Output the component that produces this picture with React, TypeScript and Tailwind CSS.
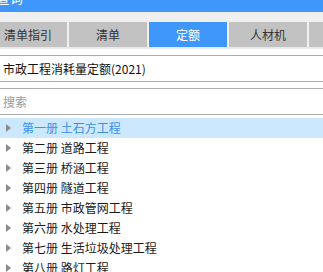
import { useState } from "react";

const tabs = ["清单指引", "清单", "定额", "人材机", ""];

const books = [
  "第一册 土石方工程",
  "第二册 道路工程",
  "第三册 桥涵工程",
  "第四册 隧道工程",
  "第五册 市政管网工程",
  "第六册 水处理工程",
  "第七册 生活垃圾处理工程",
  "第八册 路灯工程",
];

function Arrow() {
  return (
    <svg width="5" height="8" viewBox="0 0 5 8" className="shrink-0">
      <path d="M0 0 L5 4 L0 8 Z" fill="#8a8a8a" />
    </svg>
  );
}

export default function App() {
  const [active, setActive] = useState(2);
  const [selected, setSelected] = useState(0);

  return (
    <div className="w-[323px] h-[272px] overflow-hidden bg-white font-['Noto_Sans_CJK_SC','Noto_Sans',sans-serif] text-[12px] text-[#222]">
      {/* 标题栏 (上方被裁切) */}
      <div className="h-[12px] bg-[#3f97fb] overflow-hidden">
        <div className="-mt-[10px] -ml-[3px] text-white text-[13px] leading-[16px]">查询</div>
      </div>
      <div className="h-[10px] bg-[#f0f0f0]" />

      {/* 页签 */}
      <div className="flex gap-[2px] -ml-[11px] bg-[#f0f0f0]">
        {tabs.map((t, i) => (
          <button
            key={i}
            onClick={() => setActive(i)}
            className={
              "w-[78px] h-[25px] shrink-0 flex items-center justify-center text-[12px] " +
              (i === active ? "bg-[#3f97fb] text-white" : "bg-[#c2c2c2] text-[#333]")
            }
          >
            {t}
          </button>
        ))}
      </div>
      <div className="h-[2px] bg-[#e8e8e8]" />

      {/* 定额库选择 */}
      <div className="mt-[6px] h-[27px] border-y border-[#ababab] flex items-center pl-[3px] text-[12px] text-[#111]">
        市政工程消耗量定额(2021)
      </div>

      {/* 搜索 */}
      <div className="mt-[6px] h-[27px] border-y border-[#ababab] flex items-center">
        <input
          className="w-full pl-[3px] outline-none text-[12px] placeholder:text-[#9a9a9a]"
          placeholder="搜索"
        />
      </div>

      {/* 章节树 */}
      <div className="mt-[3px]">
        {books.map((b, i) => (
          <div
            key={b}
            onClick={() => setSelected(i)}
            className={
              "h-[20px] flex items-center pl-[6px] gap-[11px] " +
              (i === selected ? "bg-[#cce8ff] text-[#3a8fe8]" : "text-[#1a1a1a]")
            }
          >
            <Arrow />
            <span className="whitespace-pre">{b}</span>
          </div>
        ))}
      </div>
    </div>
  );
}
